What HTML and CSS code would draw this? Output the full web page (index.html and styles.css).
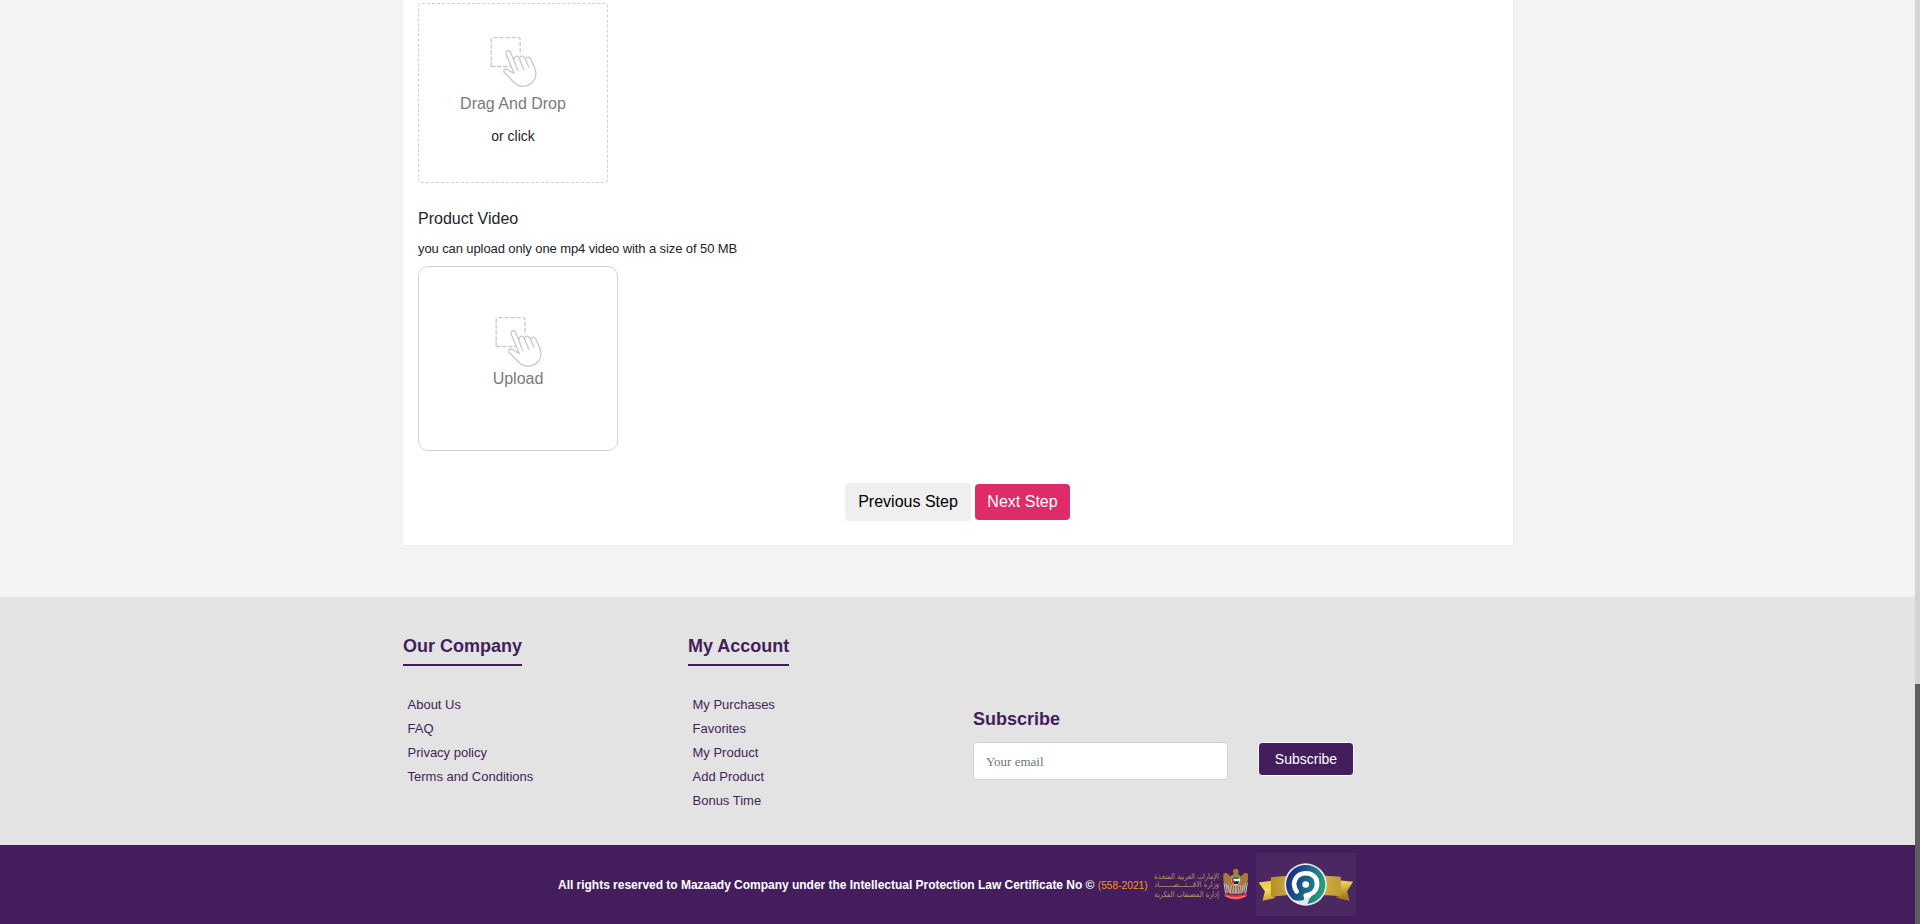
FILE: index.html
```html
<!DOCTYPE html>
<html lang="en">
<head>
<meta charset="utf-8">
<title>Mazaady - Add Product</title>
<link rel="stylesheet" href="styles.css">
</head>
<body>
<svg class="defs" width="0" height="0" aria-hidden="true">
  <symbol id="drag" viewBox="266.5 108 144 156">
    <g fill="none" stroke="#c9c9c9" stroke-width="4" stroke-linecap="round" stroke-linejoin="round">
      <path stroke-linecap="butt" stroke-dasharray="13 5" d="M273 200V119Q273 113 279 113H354Q360 113 360 119V164M273 199.500H332"/>
      <path d="M342 220L318 163C314 153 327 148 332 158L353 212M341 178C344 164 355 167 358 176L371 208M358 175C361 164 373 168 376 178L386 201M376 177C381 168 390 171 393 179L405 207C412 231 401 249 380 257C361 263 345 253 334 240L312 217C308 210 315 204 322 209L342 220"/>
    </g>
  </symbol>
</svg>
<div class="viewport">
  <div class="page">
    <main class="card">
      <div class="dropzone">
        <svg class="drag-icon"><use href="#drag"/></svg>
        <p class="drop-label">Drag And Drop</p>
        <p class="drop-alt">or click</p>
      </div>
      <h2 class="section-title">Product Video</h2>
      <p class="hint">you can upload only one mp4 video with a size of 50 MB</p>
      <div class="upload">
        <svg class="drag-icon"><use href="#drag"/></svg>
        <p class="upload-label">Upload</p>
      </div>
      <div class="actions">
        <button class="btn btn-prev">Previous Step</button>
        <button class="btn btn-next">Next Step</button>
      </div>
    </main>
    <footer class="footer">
      <div class="footer-inner">
        <section class="col">
          <h3 class="footer-title underlined">Our Company</h3>
          <ul class="links"><li>About Us</li><li>FAQ</li><li>Privacy policy</li><li>Terms and Conditions</li></ul>
        </section>
        <section class="col">
          <h3 class="footer-title underlined">My Account</h3>
          <ul class="links"><li>My Purchases</li><li>Favorites</li><li>My Product</li><li>Add Product</li><li>Bonus Time</li></ul>
        </section>
        <section class="subscribe">
          <h3 class="footer-title">Subscribe</h3>
          <div class="subscribe-row">
            <input class="email" type="text" placeholder="Your email">
            <button class="btn-subscribe">Subscribe</button>
          </div>
        </section>
      </div>
    </footer>
    <div class="legal">
      <p class="legal-text"><b class="rights">All rights reserved to Mazaady Company under the Intellectual Protection Law Certificate No ©</b> <span class="cert">(558-2021)</span></p>
      <svg class="ministry" viewBox="0 0 288 105">
        <g class="ministry-text" fill="#b99466" font-size="24">
          <text x="1" y="32" textLength="194" lengthAdjust="spacingAndGlyphs">الإمارات العربية المتحدة</text>
          <text x="1" y="58" textLength="194" lengthAdjust="spacingAndGlyphs">وزارة الاقـــتـــصـــــــاد</text>
          <text x="1" y="86" textLength="194" lengthAdjust="spacingAndGlyphs">إدارة المصنفات الفكرية</text>
        </g>
        <g transform="translate(3 0)">
          <path fill="#a9783c" d="M233 9l6-7 8 1 4 7-1 8 7 7 13-11 9 3v20l-6 15-7 12-7 15H225l-7-15-7-12-6-15V17l9-3 12 11 10-7-1-7z"/>
          <path stroke="#d8cdc4" stroke-width="3" fill="none" d="M207 44l5 32M213 47l4 28M219 51l4 23M277 44l-5 32M271 47l-4 28M265 51l-4 23"/>
          <path stroke="#8c8490" stroke-width="2" fill="none" d="M210 42l6 35M216 44l5 31M274 42l-6 35M268 44l-5 31"/>
          <path fill="#b9aaa0" d="M228 51h29l3 24H224z"/>
          <path stroke="#8d5d34" stroke-width="3" d="M233 53l-4 21M239 54l-2 20M246 54l2 20M252 53l4 21"/>
          <circle cx="242" cy="37" r="14" fill="#d9cfc0"/>
          <path fill="#218a50" d="M236 25h14l3 8h-17z"/><path fill="#fff" d="M236 33h18v7h-18z"/><path fill="#252525" d="M236 40h17l-4 8h-13z"/><path fill="#d32b35" d="M230 30l6-4v22l-6-4z"/>
          <path fill="#d8363f" d="M209 76q33 12 66 0l1 9q-34 20-68 0z"/>
          <path fill="none" stroke="#f2d5d5" stroke-width="2" d="M214 84q28 12 56 0"/>
        </g>
      </svg>
      <svg class="badge" viewBox="348 26 300 190">
        <defs>
          <linearGradient id="gold" x2=".6" y2="1"><stop offset="0" stop-color="#e8c740"/><stop offset=".4" stop-color="#f4da5c"/><stop offset="1" stop-color="#a97c16"/></linearGradient>
          <linearGradient id="band"><stop offset="0" stop-color="#b38d2a"/><stop offset=".5" stop-color="#e2c25c"/><stop offset="1" stop-color="#c09a34"/></linearGradient>
          <linearGradient id="ring" y2=".3"><stop stop-color="#1d2180"/><stop offset=".45" stop-color="#17528a"/><stop offset="1" stop-color="#259c7c"/></linearGradient>
        </defs>
        <path fill="url(#gold)" d="M355 115l38-5 8 46 3 6-37 8 7-29zM640 113l-38-4-8 46-3 6 38 9-7-29z"/>
        <path fill="#7d5b12" d="M393 153l13 9v-9zM602 153l-13 9v-9z"/>
        <path fill="url(#band)" d="M392 99l60-5v58l-60 6zM543 94l60 4v58l-60-3z"/>
        <circle cx="497" cy="121" r="64" fill="#e9e9f1"/>
        <circle cx="497" cy="121" r="59" fill="url(#ring)"/>
        <path fill="#e6e7ea" d="M456 166Q476 173 492 167V154H516Q507 164 501 181Q474 182 456 166z"/>
        <path fill="none" stroke="#fff" stroke-width="14" stroke-linecap="round" d="M470 142C452 116 468 87 498 87C520 87 534 103 531 124C529 142 514 152 497 154"/>
        <circle cx="497" cy="121" r="10" fill="#fff"/>
      </svg>
    </div>
  </div>
  <div class="scrollbar"><div class="thumb"></div></div>
</div>
</body>
</html>
```
FILE: styles.css
```css
* { box-sizing: border-box; }
body { margin: 0; font-family: "Liberation Sans", Arial, sans-serif; color: #212529; background: #f3f3f3; }
h2, h3, p, ul { margin: 0; padding: 0; }
.defs { display: block; height: 0; }
.viewport { display: grid; grid-template-columns: 1fr 5px; height: 924px; overflow: hidden; }
.page { display: flex; flex-direction: column; }
.card { width: 1110px; height: 545px; margin: 0 auto 52px 403px; padding: 3px 15px 0; background: #fff; }
.dropzone { width: 190px; height: 180px; border: 1px dashed #ced0d0; border-radius: 4px; padding-top: 32px; text-align: center; }
.drag-icon { display: block; width: 48px; height: 52px; margin: 0 auto; }
.drop-label { font-size: 16px; line-height: 24px; color: #7b7b7b; margin-top: 4px; }
.drop-alt { font-size: 14px; line-height: 21px; margin-top: 10px; }
.section-title { font-size: 16px; font-weight: 400; line-height: 24px; margin-top: 24px; }
.hint { font-size: 13px; line-height: 20px; letter-spacing: -.1px; margin-top: 8px; }
.upload { width: 200px; height: 185px; border: 1px solid #d3d3d3; border-radius: 10px; margin-top: 7px; padding-top: 49px; text-align: center; }
.upload-label { font-size: 16px; line-height: 24px; color: #7b7b7b; margin-top: -1px; }
.actions { display: flex; justify-content: center; align-items: center; gap: 4px; margin: 32px 2px 0 0; }
.btn { font: 16px/24px "Liberation Sans", Arial, sans-serif; border: 0; border-radius: 4px; padding: 0 0 0 1px; }
.btn-prev { width: 126px; height: 38px; background: #efefef; color: #000; }
.btn-next { width: 95px; height: 36px; background: #df2b68; color: #fff; }
.footer { height: 248px; background: #e3e3e3; padding-left: 403px; }
.footer-inner { display: grid; grid-template-columns: 285px 285px 400px; }
.col { padding-top: 36px; }
.footer-title { width: max-content; font-size: 18px; font-weight: 700; line-height: 27px; color: #441e5c; }
.underlined { height: 33px; border-bottom: 2px solid #441e5c; }
.links { list-style: none; margin-top: 27px; padding-left: 4.5px; font-size: 13px; line-height: 24px; color: #441e5c; }
.subscribe { padding-top: 109px; }
.subscribe-row { display: flex; align-items: flex-start; gap: 30px; margin-top: 9px; }
.email { width: 255px; height: 38px; border: 1px solid #ced4da; border-radius: 4px; padding: 2px 12px 0; background: #fff; font: 13px "Liberation Serif", "Times New Roman", serif; }
.email::placeholder { color: #6c757d; opacity: 1; }
.btn-subscribe { width: 96px; height: 34px; border: 1px solid #fff; border-radius: 4px; background: #441e5c; color: #fff; font: 14px "Liberation Sans", Arial, sans-serif; padding: 0; }
.legal { height: 79px; background: #441e5c; display: flex; align-items: flex-start; padding-left: 558px; }
.legal-text { width: 596px; padding-top: 30px; font-size: 12px; line-height: 20px; color: #fff; white-space: nowrap; }
.rights { font-size: 12px; letter-spacing: -.02px; }
.cert { font-size: 10.2px; color: #f7941d; }
.ministry { width: 96px; height: 35px; margin-top: 23px; flex: none; }
.ministry-text { font-family: "DejaVu Sans", sans-serif; }
.badge { width: 100px; height: 63px; margin: 8px 0 0 6px; background: #4c2862; flex: none; }
.scrollbar { background: #d3d3d3; padding-top: 684px; }
.thumb { height: 240px; background: #5e5e5e; }
```
